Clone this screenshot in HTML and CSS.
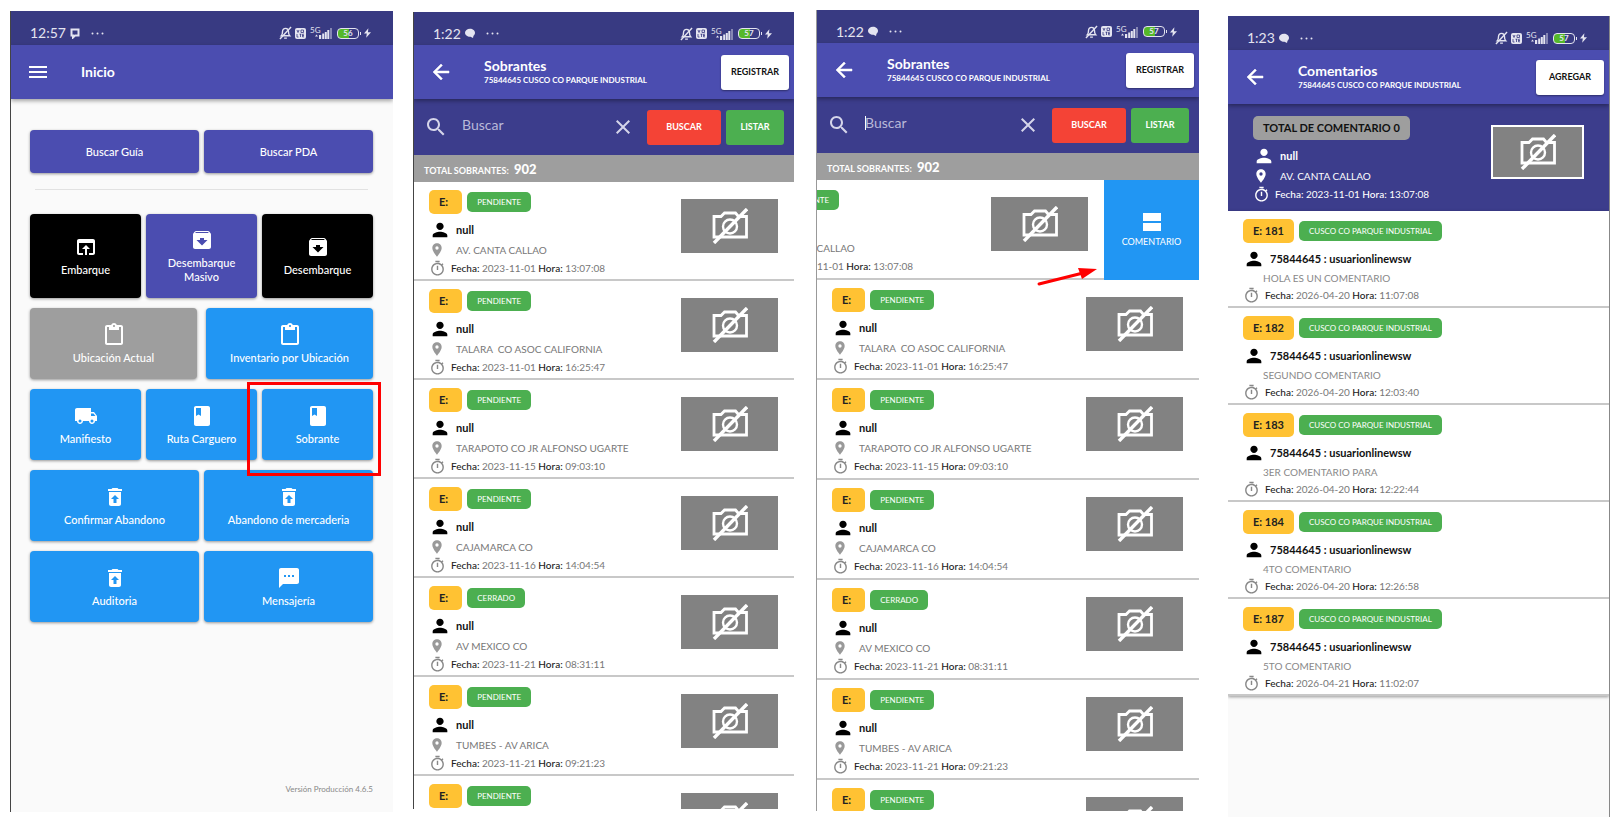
FILE: index.html
```html
<!DOCTYPE html>
<html lang="es">
<head>
<meta charset="utf-8">
<title>Sobrantes</title>
<link rel="stylesheet" href="styles.css">
</head>
<body>
<svg class="sprite" aria-hidden="true">
  <symbol id="person" viewBox="0 0 24 24"><path d="M12 12c2.21 0 4-1.79 4-4s-1.79-4-4-4-4 1.79-4 4 1.79 4 4 4zm0 2c-2.67 0-8 1.34-8 4v2h16v-2c0-2.66-5.33-4-8-4z"/></symbol>
  <symbol id="pin" viewBox="0 0 24 24"><path d="M12 2C8.13 2 5 5.13 5 9c0 5.25 7 13 7 13s7-7.75 7-13c0-3.87-3.13-7-7-7zm0 9.5a2.5 2.5 0 0 1 0-5 2.5 2.5 0 0 1 0 5z"/></symbol>
  <symbol id="timer" viewBox="0 0 24 24"><path d="M15 1H9v2h6V1zm-4 13h2V8h-2v6zm8.03-6.61l1.42-1.42c-.43-.51-.9-.99-1.41-1.41l-1.42 1.42C16.07 4.74 14.12 4 12 4c-4.97 0-9 4.03-9 9s4.02 9 9 9 9-4.03 9-9c0-2.12-.74-4.07-1.97-5.61zM12 20c-3.87 0-7-3.13-7-7s3.13-7 7-7 7 3.13 7 7-3.13 7-7 7z"/></symbol>
  <symbol id="back" viewBox="0 0 24 24"><path d="M20 11H7.83l5.59-5.59L12 4l-8 8 8 8 1.41-1.41L7.83 13H20v-2z" stroke="currentColor" stroke-width=".5"/></symbol>
  <symbol id="menu" viewBox="0 0 24 24"><path d="M3 18h18v-2H3v2zm0-5h18v-2H3v2zm0-7v2h18V6H3z"/></symbol>
  <symbol id="search" viewBox="0 0 24 24"><path d="M15.5 14h-.79l-.28-.27C15.41 12.59 16 11.11 16 9.5 16 5.91 13.09 3 9.5 3S3 5.91 3 9.5 5.91 16 9.5 16c1.61 0 3.09-.59 4.23-1.57l.27.28v.79l5 4.99L20.49 19l-4.99-5zm-6 0C7.01 14 5 11.99 5 9.5S7.01 5 9.5 5 14 7.01 14 9.5 11.99 14 9.5 14z"/></symbol>
  <symbol id="close" viewBox="0 0 24 24"><path d="M19 6.41L17.59 5 12 10.59 6.41 5 5 6.41 10.59 12 5 17.59 6.41 19 12 13.41 17.59 19 19 17.59 13.41 12z"/></symbol>
  <symbol id="open" viewBox="0 0 24 24"><path d="M19 4H5c-1.11 0-2 .9-2 2v12c0 1.1.89 2 2 2h4v-2H5V8h14v10h-4v2h4c1.1 0 2-.9 2-2V6c0-1.1-.89-2-2-2zm-7 6l-4 4h3v6h2v-6h3l-4-4z"/></symbol>
  <symbol id="archive" viewBox="0 0 24 24"><path d="M20.54 5.23l-1.39-1.68C18.88 3.21 18.47 3 18 3H6c-.47 0-.88.21-1.16.55L3.46 5.23C3.17 5.57 3 6.02 3 6.5V19c0 1.1.9 2 2 2h14c1.1 0 2-.9 2-2V6.5c0-.48-.17-.93-.46-1.27zM12 17.5L6.5 12H10v-2h4v2h3.5L12 17.5zM5.12 5l.81-1h12l.94 1H5.12z"/></symbol>
  <symbol id="clipboard" viewBox="0 0 24 24"><path d="M19 2h-4.18C14.4.84 13.3 0 12 0S9.6.84 9.18 2H5c-1.1 0-2 .9-2 2v16c0 1.1.9 2 2 2h14c1.1 0 2-.9 2-2V4c0-1.1-.9-2-2-2zm-7 0c.55 0 1 .45 1 1s-.45 1-1 1-1-.45-1-1 .45-1 1-1zm7 18H5V4h2v3h10V4h2v16z"/></symbol>
  <symbol id="truck" viewBox="0 0 24 24"><path d="M20 8h-3V4H3c-1.1 0-2 .9-2 2v11h2c0 1.66 1.34 3 3 3s3-1.34 3-3h6c0 1.66 1.34 3 3 3s3-1.34 3-3h2v-5l-3-4zM6 18.5a1.5 1.5 0 0 1 0-3 1.5 1.5 0 0 1 0 3zm13.500-9l1.96 2.5H17V9.5h2.5zm-1.5 9a1.5 1.5 0 0 1 0-3 1.5 1.5 0 0 1 0 3z"/></symbol>
  <symbol id="book" viewBox="0 0 24 24"><path d="M18 2H6c-1.1 0-2 .9-2 2v16c0 1.1.9 2 2 2h12c1.1 0 2-.9 2-2V4c0-1.1-.9-2-2-2zM6 4h5v8l-2.5-1.5L6 12V4z"/></symbol>
  <symbol id="trash" viewBox="0 0 24 24"><path d="M6 19c0 1.1.9 2 2 2h8c1.1 0 2-.9 2-2V7H6v12zm6-9l4 4h-2.5v4h-3v-4H8l4-4zm3.500-6l-1-1h-5l-1 1H5v2h14V4z"/></symbol>
  <symbol id="sms" viewBox="0 0 24 24"><path d="M20 2H4c-1.1 0-2 .9-2 2v18l4-4h14c1.1 0 2-.9 2-2V4c0-1.1-.9-2-2-2zM9 11H7V9h2v2zm4 0h-2V9h2v2zm4 0h-2V9h2v2z"/></symbol>
  <symbol id="stream" viewBox="0 0 24 24"><path d="M3 3h18v8H3zM3 13h18v8H3z"/></symbol>
  <symbol id="no-photo" viewBox="0 0 36 36"><g fill="none" stroke="currentColor"><path d="M2 8.500h7l3.500-3.500h11l3 3.500h8v20.500H2z" stroke-width="2.800"/><circle cx="18" cy="18.500" r="7" stroke-width="2.400"/><path d="M2 35L35 1" stroke-width="3.400"/></g></symbol>
  <symbol id="bell-off" viewBox="0 0 14 14"><g fill="none" stroke="currentColor" stroke-width="1.500"><path d="M2.500 10h9c-1-1-1.300-2-1.300-4.500 0-2-1.400-3.500-3.200-3.500S3.800 3.500 3.800 5.500C3.800 8 3.500 9 2.500 10zM5.500 12.500h3"/><path d="M1 13.500L13 .5"/></g></symbol>
  <symbol id="volte" viewBox="0 0 11 11"><rect width="11" height="11" rx="2"/><g fill="none" stroke="#383a82" stroke-width=".8"><path d="M2 2l1 2.500L4 2M6 2h2.500v2.500H6zM2 6v3h1.500M4.500 6.200h2M5.500 6v3M9 6.200H7.500v2.600H9M7.500 7.500H9"/></g></symbol>
  <symbol id="signal" viewBox="0 0 17 12"><path d="M0 9.500l1.500-2 1.500 2zM4 8h2.200v4H4zM7.200 6.500h2V12h-2zM9.800 5h2v7h-2zM12.300 3h2v9h-2z"/><path d="M15 1h2v11h-2z" opacity=".45"/></symbol>
  <symbol id="bolt" viewBox="0 0 8 11"><path d="M5 0L0 6h3.200L2.500 11 8 4.500H4.500z"/></symbol>
  <symbol id="bubble" viewBox="0 0 10 11"><path d="M1.500 1.500h7v6H5L3 9.500v-2H1.500z" fill="none" stroke="currentColor" stroke-width="2"/></symbol>
  <symbol id="blob" viewBox="0 0 10 11"><path d="M5 .8c2.800 0 5 1.700 5 4 0 1.300-.7 2.300-1.500 3L8 10 5.500 8.800C2.500 9 0 7.200 0 4.800 0 2.500 2.200.8 5 .8z"/></symbol>
  <symbol id="more" viewBox="0 0 13 3"><circle cx="1.500" cy="1.500" r="1"/><circle cx="6.500" cy="1.500" r="1"/><circle cx="11.500" cy="1.500" r="1"/></symbol>
</svg>

<main class="screens">

<section class="screen screen-home">
  <div class="status"><span class="clock">12:57</span><svg class="note"><use href="#bubble"/></svg><svg class="dots"><use href="#more"/></svg>
    <div class="indicators"><svg class="i-bell"><use href="#bell-off"/></svg><svg class="i-volte"><use href="#volte"/></svg><span class="net">5G</span><svg class="i-signal"><use href="#signal"/></svg><span class="battery">56</span><svg class="i-bolt"><use href="#bolt"/></svg></div></div>
  <header class="appbar"><button class="nav" aria-label="Menú"><svg><use href="#menu"/></svg></button><h1 class="title">Inicio</h1></header>
  <div class="home">
    <div class="tiles short"><button class="tile indigo">Buscar Guía</button><button class="tile indigo">Buscar PDA</button></div>
    <hr class="rule">
    <div class="stack">
      <div class="tiles tall"><button class="tile black"><svg><use href="#open"/></svg>Embarque</button><button class="tile indigo"><svg><use href="#archive"/></svg>Desembarque Masivo</button><button class="tile black"><svg><use href="#archive"/></svg>Desembarque</button></div>
      <div class="tiles wide-gap"><button class="tile gray"><svg><use href="#clipboard"/></svg>Ubicación Actual</button><button class="tile blue"><svg><use href="#clipboard"/></svg>Inventario por Ubicación</button></div>
      <div class="tiles"><button class="tile blue"><svg><use href="#truck"/></svg>Manifiesto</button><button class="tile blue"><svg><use href="#book"/></svg>Ruta Carguero</button><button class="tile blue marked"><svg><use href="#book"/></svg>Sobrante</button></div>
      <div class="tiles"><button class="tile blue"><svg><use href="#trash"/></svg>Confirmar Abandono</button><button class="tile blue"><svg><use href="#trash"/></svg>Abandono de mercaderia</button></div>
      <div class="tiles"><button class="tile blue"><svg><use href="#trash"/></svg>Auditoria</button><button class="tile blue"><svg><use href="#sms"/></svg>Mensajería</button></div>
    </div>
    <p class="version">Versión Producción 4.6.5</p>
  </div>
</section>

<section class="screen screen-list">
  <div class="status"><span class="clock">1:22</span><svg class="note"><use href="#blob"/></svg><svg class="dots"><use href="#more"/></svg>
    <div class="indicators"><svg class="i-bell"><use href="#bell-off"/></svg><svg class="i-volte"><use href="#volte"/></svg><span class="net">5G</span><svg class="i-signal"><use href="#signal"/></svg><span class="battery">57</span><svg class="i-bolt"><use href="#bolt"/></svg></div></div>
  <header class="appbar"><button class="nav" aria-label="Atrás"><svg><use href="#back"/></svg></button><div class="heading"><h1 class="title">Sobrantes</h1><p class="subtitle">75844645 CUSCO CO PARQUE INDUSTRIAL</p></div><button class="action">REGISTRAR</button></header>
  <form class="search"><svg class="glass"><use href="#search"/></svg><input class="query" type="text" placeholder="Buscar" aria-label="Buscar"><button type="button" class="clear" aria-label="Borrar"><svg><use href="#close"/></svg></button><button type="button" class="find">BUSCAR</button><button type="button" class="all">LISTAR</button></form>
  <p class="total">TOTAL SOBRANTES: <b>902</b></p>
  <ul class="list">
    <li class="row"><div class="info"><div class="tags"><span class="tag">E:</span><span class="state">PENDIENTE</span></div><p class="who"><svg><use href="#person"/></svg>null</p><p class="where"><svg><use href="#pin"/></svg>AV. CANTA CALLAO</p><p class="when"><svg><use href="#timer"/></svg><span><b>Fecha:</b> 2023-11-01 <b>Hora:</b> 13:07:08</span></p></div><div class="photo"><svg><use href="#no-photo"/></svg></div></li>
    <li class="row"><div class="info"><div class="tags"><span class="tag">E:</span><span class="state">PENDIENTE</span></div><p class="who"><svg><use href="#person"/></svg>null</p><p class="where"><svg><use href="#pin"/></svg>TALARA &nbsp;CO ASOC CALIFORNIA</p><p class="when"><svg><use href="#timer"/></svg><span><b>Fecha:</b> 2023-11-01 <b>Hora:</b> 16:25:47</span></p></div><div class="photo"><svg><use href="#no-photo"/></svg></div></li>
    <li class="row"><div class="info"><div class="tags"><span class="tag">E:</span><span class="state">PENDIENTE</span></div><p class="who"><svg><use href="#person"/></svg>null</p><p class="where"><svg><use href="#pin"/></svg>TARAPOTO CO JR ALFONSO UGARTE</p><p class="when"><svg><use href="#timer"/></svg><span><b>Fecha:</b> 2023-11-15 <b>Hora:</b> 09:03:10</span></p></div><div class="photo"><svg><use href="#no-photo"/></svg></div></li>
    <li class="row"><div class="info"><div class="tags"><span class="tag">E:</span><span class="state">PENDIENTE</span></div><p class="who"><svg><use href="#person"/></svg>null</p><p class="where"><svg><use href="#pin"/></svg>CAJAMARCA CO</p><p class="when"><svg><use href="#timer"/></svg><span><b>Fecha:</b> 2023-11-16 <b>Hora:</b> 14:04:54</span></p></div><div class="photo"><svg><use href="#no-photo"/></svg></div></li>
    <li class="row"><div class="info"><div class="tags"><span class="tag">E:</span><span class="state">CERRADO</span></div><p class="who"><svg><use href="#person"/></svg>null</p><p class="where"><svg><use href="#pin"/></svg>AV MEXICO CO</p><p class="when"><svg><use href="#timer"/></svg><span><b>Fecha:</b> 2023-11-21 <b>Hora:</b> 08:31:11</span></p></div><div class="photo"><svg><use href="#no-photo"/></svg></div></li>
    <li class="row"><div class="info"><div class="tags"><span class="tag">E:</span><span class="state">PENDIENTE</span></div><p class="who"><svg><use href="#person"/></svg>null</p><p class="where"><svg><use href="#pin"/></svg>TUMBES - AV ARICA</p><p class="when"><svg><use href="#timer"/></svg><span><b>Fecha:</b> 2023-11-21 <b>Hora:</b> 09:21:23</span></p></div><div class="photo"><svg><use href="#no-photo"/></svg></div></li>
    <li class="row"><div class="info"><div class="tags"><span class="tag">E:</span><span class="state">PENDIENTE</span></div></div><div class="photo"><svg><use href="#no-photo"/></svg></div></li>
  </ul>
</section>

<section class="screen screen-swipe">
  <div class="status"><span class="clock">1:22</span><svg class="note"><use href="#blob"/></svg><svg class="dots"><use href="#more"/></svg>
    <div class="indicators"><svg class="i-bell"><use href="#bell-off"/></svg><svg class="i-volte"><use href="#volte"/></svg><span class="net">5G</span><svg class="i-signal"><use href="#signal"/></svg><span class="battery">57</span><svg class="i-bolt"><use href="#bolt"/></svg></div></div>
  <header class="appbar"><button class="nav" aria-label="Atrás"><svg><use href="#back"/></svg></button><div class="heading"><h1 class="title">Sobrantes</h1><p class="subtitle">75844645 CUSCO CO PARQUE INDUSTRIAL</p></div><button class="action">REGISTRAR</button></header>
  <form class="search"><svg class="glass"><use href="#search"/></svg><input class="query focused" type="text" placeholder="Buscar" aria-label="Buscar"><button type="button" class="clear" aria-label="Borrar"><svg><use href="#close"/></svg></button><button type="button" class="find">BUSCAR</button><button type="button" class="all">LISTAR</button></form>
  <p class="total">TOTAL SOBRANTES: <b>902</b></p>
  <ul class="list">
    <li class="swipe"><div class="row"><div class="info"><div class="tags"><span class="tag">E:</span><span class="state">PENDIENTE</span></div><p class="who"><svg><use href="#person"/></svg>null</p><p class="where"><svg><use href="#pin"/></svg>AV. CANTA CALLAO</p><p class="when"><svg><use href="#timer"/></svg><span><b>Fecha:</b> 2023-11-01 <b>Hora:</b> 13:07:08</span></p></div><div class="photo"><svg><use href="#no-photo"/></svg></div></div><button class="comment"><svg><use href="#stream"/></svg>COMENTARIO</button></li>
    <li class="row"><div class="info"><div class="tags"><span class="tag">E:</span><span class="state">PENDIENTE</span></div><p class="who"><svg><use href="#person"/></svg>null</p><p class="where"><svg><use href="#pin"/></svg>TALARA &nbsp;CO ASOC CALIFORNIA</p><p class="when"><svg><use href="#timer"/></svg><span><b>Fecha:</b> 2023-11-01 <b>Hora:</b> 16:25:47</span></p></div><div class="photo"><svg><use href="#no-photo"/></svg></div></li>
    <li class="row"><div class="info"><div class="tags"><span class="tag">E:</span><span class="state">PENDIENTE</span></div><p class="who"><svg><use href="#person"/></svg>null</p><p class="where"><svg><use href="#pin"/></svg>TARAPOTO CO JR ALFONSO UGARTE</p><p class="when"><svg><use href="#timer"/></svg><span><b>Fecha:</b> 2023-11-15 <b>Hora:</b> 09:03:10</span></p></div><div class="photo"><svg><use href="#no-photo"/></svg></div></li>
    <li class="row"><div class="info"><div class="tags"><span class="tag">E:</span><span class="state">PENDIENTE</span></div><p class="who"><svg><use href="#person"/></svg>null</p><p class="where"><svg><use href="#pin"/></svg>CAJAMARCA CO</p><p class="when"><svg><use href="#timer"/></svg><span><b>Fecha:</b> 2023-11-16 <b>Hora:</b> 14:04:54</span></p></div><div class="photo"><svg><use href="#no-photo"/></svg></div></li>
    <li class="row"><div class="info"><div class="tags"><span class="tag">E:</span><span class="state">CERRADO</span></div><p class="who"><svg><use href="#person"/></svg>null</p><p class="where"><svg><use href="#pin"/></svg>AV MEXICO CO</p><p class="when"><svg><use href="#timer"/></svg><span><b>Fecha:</b> 2023-11-21 <b>Hora:</b> 08:31:11</span></p></div><div class="photo"><svg><use href="#no-photo"/></svg></div></li>
    <li class="row"><div class="info"><div class="tags"><span class="tag">E:</span><span class="state">PENDIENTE</span></div><p class="who"><svg><use href="#person"/></svg>null</p><p class="where"><svg><use href="#pin"/></svg>TUMBES - AV ARICA</p><p class="when"><svg><use href="#timer"/></svg><span><b>Fecha:</b> 2023-11-21 <b>Hora:</b> 09:21:23</span></p></div><div class="photo"><svg><use href="#no-photo"/></svg></div></li>
    <li class="row"><div class="info"><div class="tags"><span class="tag">E:</span><span class="state">PENDIENTE</span></div></div><div class="photo"><svg><use href="#no-photo"/></svg></div></li>
  </ul>
  <svg class="pointer" viewBox="0 0 60 20" aria-hidden="true"><path d="M2 18L46 7" stroke="#f00" stroke-width="3" stroke-linecap="round"/><path d="M41 2L60 3L45 13z" fill="#f00"/></svg>
</section>

<section class="screen screen-comments">
  <div class="status"><span class="clock">1:23</span><svg class="note"><use href="#blob"/></svg><svg class="dots"><use href="#more"/></svg>
    <div class="indicators"><svg class="i-bell"><use href="#bell-off"/></svg><svg class="i-volte"><use href="#volte"/></svg><span class="net">5G</span><svg class="i-signal"><use href="#signal"/></svg><span class="battery">57</span><svg class="i-bolt"><use href="#bolt"/></svg></div></div>
  <header class="appbar"><button class="nav" aria-label="Atrás"><svg><use href="#back"/></svg></button><div class="heading"><h1 class="title">Comentarios</h1><p class="subtitle">75844645 CUSCO CO PARQUE INDUSTRIAL</p></div><button class="action">AGREGAR</button></header>
  <div class="row summary"><div class="info"><div class="tags"><span class="tag">TOTAL DE COMENTARIO 0</span></div><p class="who"><svg><use href="#person"/></svg>null</p><p class="where"><svg><use href="#pin"/></svg>AV. CANTA CALLAO</p><p class="when"><svg><use href="#timer"/></svg><span><b>Fecha:</b> 2023-11-01 <b>Hora:</b> 13:07:08</span></p></div><div class="photo"><svg><use href="#no-photo"/></svg></div></div>
  <ul class="list">
    <li class="row"><div class="info"><div class="tags"><span class="tag">E: 181</span><span class="state">CUSCO CO PARQUE INDUSTRIAL</span></div><p class="who"><svg><use href="#person"/></svg>75844645 : usuarionlinewsw</p><p class="text">HOLA ES UN COMENTARIO</p><p class="when"><svg><use href="#timer"/></svg><span><b>Fecha:</b> 2026-04-20 <b>Hora:</b> 11:07:08</span></p></div></li>
    <li class="row"><div class="info"><div class="tags"><span class="tag">E: 182</span><span class="state">CUSCO CO PARQUE INDUSTRIAL</span></div><p class="who"><svg><use href="#person"/></svg>75844645 : usuarionlinewsw</p><p class="text">SEGUNDO COMENTARIO</p><p class="when"><svg><use href="#timer"/></svg><span><b>Fecha:</b> 2026-04-20 <b>Hora:</b> 12:03:40</span></p></div></li>
    <li class="row"><div class="info"><div class="tags"><span class="tag">E: 183</span><span class="state">CUSCO CO PARQUE INDUSTRIAL</span></div><p class="who"><svg><use href="#person"/></svg>75844645 : usuarionlinewsw</p><p class="text">3ER COMENTARIO PARA</p><p class="when"><svg><use href="#timer"/></svg><span><b>Fecha:</b> 2026-04-20 <b>Hora:</b> 12:22:44</span></p></div></li>
    <li class="row"><div class="info"><div class="tags"><span class="tag">E: 184</span><span class="state">CUSCO CO PARQUE INDUSTRIAL</span></div><p class="who"><svg><use href="#person"/></svg>75844645 : usuarionlinewsw</p><p class="text">4TO COMENTARIO</p><p class="when"><svg><use href="#timer"/></svg><span><b>Fecha:</b> 2026-04-20 <b>Hora:</b> 12:26:58</span></p></div></li>
    <li class="row"><div class="info"><div class="tags"><span class="tag">E: 187</span><span class="state">CUSCO CO PARQUE INDUSTRIAL</span></div><p class="who"><svg><use href="#person"/></svg>75844645 : usuarionlinewsw</p><p class="text">5TO COMENTARIO</p><p class="when"><svg><use href="#timer"/></svg><span><b>Fecha:</b> 2026-04-21 <b>Hora:</b> 11:02:07</span></p></div></li>
  </ul>
</section>

</main>
</body>
</html>
```

FILE: styles.css
```css
* { box-sizing: border-box; }
body, h1, p, ul { margin: 0; padding: 0; }
body { background: #fff; font: 11px/16px Lato, "Open Sans", sans-serif; color: #222; }
ul { list-style: none; }
button { font: inherit; color: inherit; border: 0; padding: 0; background: none; cursor: pointer; }
svg { display: block; fill: currentColor; flex: none; }
.sprite { position: absolute; width: 0; height: 0; }

.screens { display: flex; height: 100vh; min-height: 640px; padding: 0 10px; }
.screen { --status: 33px; flex: 382 1 0; min-width: 0; display: flex; flex-direction: column; overflow: hidden; position: relative; background: #fafafa; border-left: 1px solid #444; }
.screen-home { --status: 34px; flex-grow: 383; margin: 11px 0 16px; }
.screen-list { flex-grow: 381; margin: 12px 0 19px 20px; }
.screen-swipe { flex-grow: 383; margin: 10px 0 17px 22px; border-left-color: #999; }
.screen-comments { --status: 34px; margin: 16px 0 11px 29px; border-left: 0; border-right: 1px solid #888; }

/* system status bar */
.status { flex: none; height: var(--status); padding: 10px 22px 0 19px; display: flex; align-items: center; background: #383a82; color: #e4e4f0; }
.clock { font-size: 14px; }
.note { width: 10px; height: 11px; margin-left: 4px; }
.dots { width: 13px; height: 3px; margin-left: 11px; }
.indicators { margin-left: auto; display: flex; align-items: center; }
.i-bell { width: 13px; height: 14px; margin-right: 3px; }
.i-volte { width: 11px; height: 11px; margin-right: 4px; }
.net { width: 5px; font-size: 8px; line-height: 8px; align-self: flex-start; }
.i-signal { width: 17px; height: 12px; margin-right: 5px; }
.battery { position: relative; width: 22px; height: 11px; margin-right: 5px; border: 1px solid #e4e4f0; border-radius: 4px; background: linear-gradient(90deg, #55b82a 55%, transparent 55%); font-size: 8px; line-height: 9px; font-weight: 700; text-align: center; }
.battery::after { content: ""; position: absolute; right: -3px; top: 3px; width: 1px; height: 3px; background: #e4e4f0; }
.i-bolt { width: 7px; height: 10px; }

/* app bar */
.appbar { flex: none; height: 54px; padding: 0 5px 0 15px; display: flex; align-items: center; background: #4b4db0; color: #fff; box-shadow: 0 2px 4px rgba(0, 0, 0, .35); z-index: 1; }
.nav { width: 24px; height: 24px; margin-right: 31px; }
.nav svg { width: 24px; height: 24px; }
.title { font-size: 14px; line-height: 16px; font-weight: 700; }
.subtitle { font-size: 8px; line-height: 12px; font-weight: 700; }
.action { margin-left: auto; width: 68px; height: 35px; border-radius: 3px; background: #fff; color: #111; font-size: 9px; font-weight: 700; box-shadow: 0 1px 2px rgba(0, 0, 0, .4); }

/* home */
.home { flex: 1; padding: 31px 20px 15px 19px; display: flex; flex-direction: column; }
.tiles { display: flex; gap: 5px; min-height: 71px; }
.tiles.short { min-height: 43px; }
.tiles.tall { min-height: 84px; }
.tiles.wide-gap { gap: 9px; }
.rule { width: calc(100% - 10px); margin: 16px auto 24px; border: 0; border-top: 1px solid #e2e2e2; }
.stack { display: flex; flex-direction: column; gap: 10px; }
.tile { flex: 1 1 0; position: relative; display: flex; flex-direction: column; align-items: center; justify-content: center; gap: 4px; border-radius: 4px; padding: 0 12px; color: #fff; font-size: 11px; line-height: 14px; font-weight: 500; box-shadow: 0 1px 3px rgba(0, 0, 0, .4); }
.tile svg { width: 24px; height: 24px; }
.indigo { background: #4b4db0; }
.black { background: #000; }
.gray { background: #9e9e9e; }
.blue { background: #2196f3; }
.marked { z-index: 1; }
.marked::after { content: ""; position: absolute; inset: -7px -8px -16px -15px; border: 3px solid #f00; }
.version { margin-top: auto; text-align: right; font-size: 8px; color: #888; }

/* search */
.search { flex: none; height: 56px; padding: 0 10px; display: flex; align-items: center; background: #3c3d8c; color: #d5d5ea; }
.glass { width: 24px; height: 24px; }
.query { flex: 1; min-width: 0; height: 24px; margin: 0 0 4px 14px; padding: 0; border: 0; outline: 0; background: none; color: #fff; font: 14px/24px Lato, sans-serif; }
.query::placeholder { color: #b9b9d9; opacity: 1; }
.query.focused { background: linear-gradient(#fff, #fff) 0 50% / 1px 14px no-repeat; }
.clear { width: 24px; height: 24px; margin-right: 12px; }
.clear svg { width: 24px; height: 24px; }
.find, .all { height: 35px; border-radius: 3px; color: #fff; font-size: 9px; font-weight: 700; }
.find { width: 74px; background: #f44336; margin-right: 5px; }
.all { width: 58px; background: #4caf50; }
.total { flex: none; height: 27px; padding: 0 10px; line-height: 28px; background: #9e9e9e; color: #fff; font-size: 9px; font-weight: 700; }
.total b { margin-left: 3px; font-size: 13px; }

/* rows */
.row { display: flex; justify-content: space-between; align-items: flex-start; padding: 8px 16px 3px 15px; background: #fff; border-bottom: 2px solid #c8c8c8; }
.screen-list .row { padding-bottom: 2px; }
.tags { display: flex; align-items: center; gap: 5px; margin-bottom: 5px; }
.tag { height: 24px; padding: 0 10px; border-radius: 5px; background: #ffc233; color: #222; font-size: 11px; line-height: 24px; font-weight: 700; }
.screen-list .tag, .screen-swipe .tag { padding-right: 14px; }
.state { height: 20px; padding: 0 10px; border-radius: 5px; background: #4caf50; color: #fff; font-size: 8px; line-height: 20px; }
.who, .where, .when { display: flex; align-items: center; white-space: nowrap; }
.who { height: 22px; color: #111; font-weight: 700; }
.who svg { width: 22px; height: 22px; margin-right: 5px; color: #000; }
.where { height: 18px; color: #777; font-size: 10px; }
.where svg { width: 16px; height: 16px; margin-right: 11px; color: #999; }
.when { height: 18px; color: #777; font-size: 10px; }
.when svg { width: 17px; height: 17px; margin-right: 5px; color: #888; }
.when b { color: #222; font-weight: 500; }
.text { padding-left: 20px; color: #888; font-size: 10px; }
.photo { width: 97px; height: 54px; margin-top: 9px; display: flex; align-items: center; justify-content: center; background: #828282; color: #fff; }
.photo svg { width: 36px; height: 36px; }

.swipe { display: flex; overflow: hidden; }
.swipe .row { flex: 0 0 100%; margin-left: -95px; }
.comment { flex: none; width: 95px; display: flex; flex-direction: column; align-items: center; justify-content: center; background: #2196f3; color: #fff; font-size: 9px; }
.comment svg { width: 24px; height: 24px; }
.pointer { position: absolute; right: 102px; top: 256px; width: 60px; height: 20px; }

/* comments */
.screen-comments .row { padding-bottom: 2px; }
.screen-comments .list { box-shadow: 0 1px 3px rgba(0, 0, 0, .4); }
.screen-comments .summary { padding: 12px 25px 8px; border: 0; background: #3c3d8c; color: #fff; }
.summary .tag { background: #9e9e9e; color: #111; }
.summary .who, .summary .where, .summary .when, .summary svg, .summary b { color: #fff; }
.summary .photo { width: 93px; border: 2px solid #fff; }
```
